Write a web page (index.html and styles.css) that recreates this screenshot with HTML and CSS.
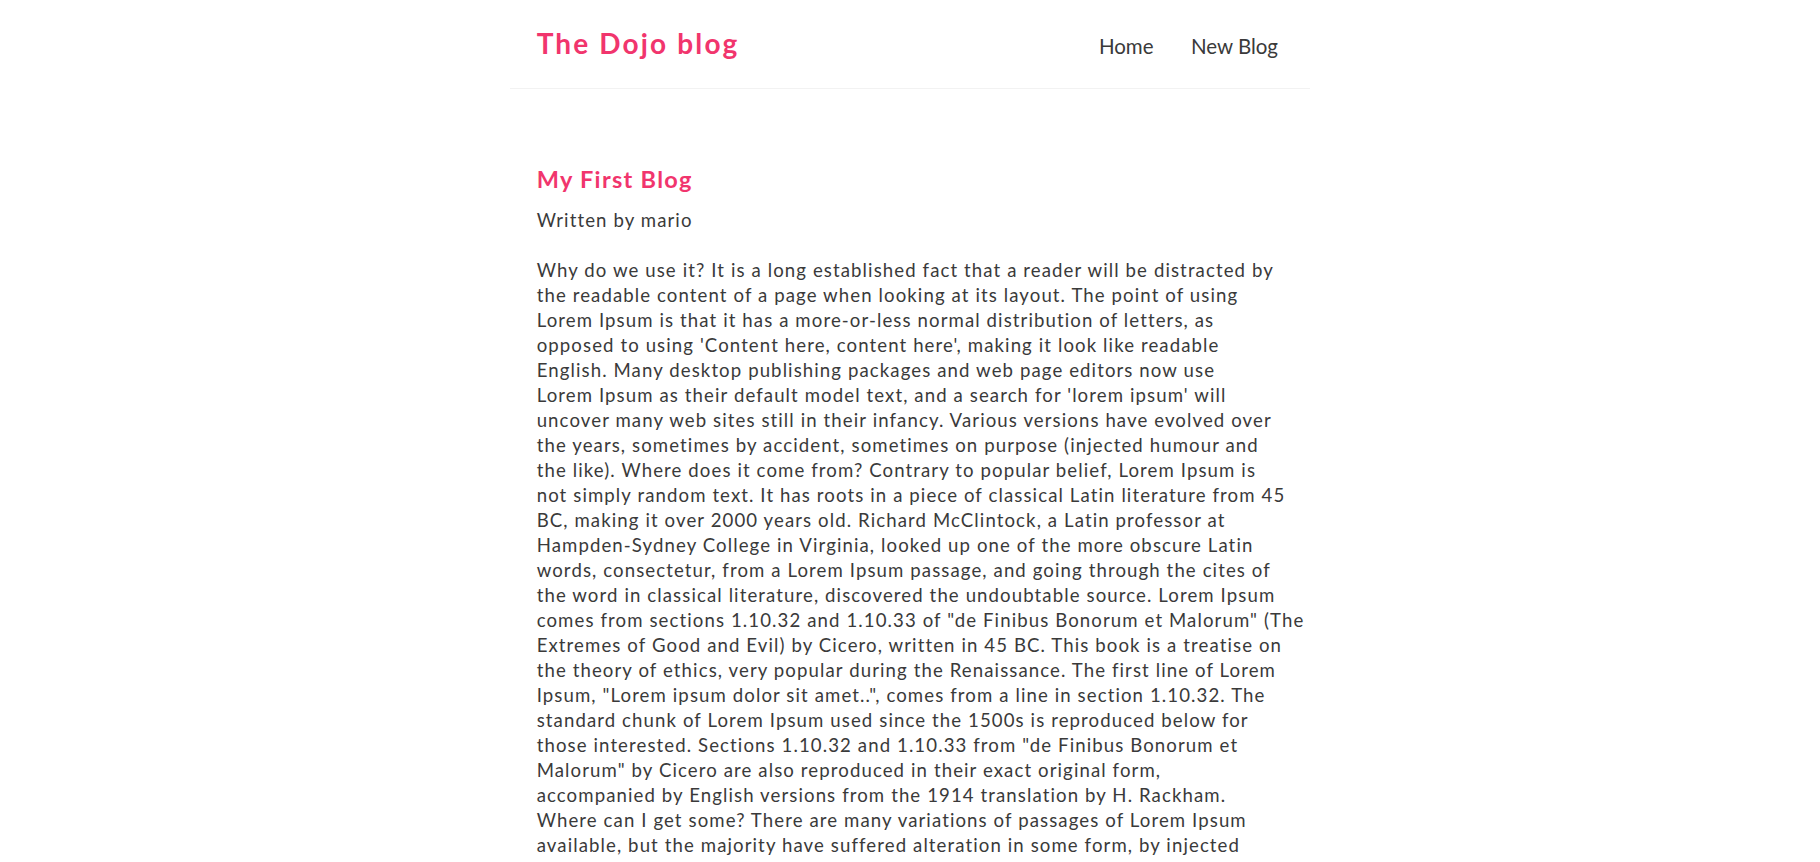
FILE: index.html
```html
<!DOCTYPE html>
<html lang="en">
<head>
<meta charset="utf-8">
<title>The Dojo blog</title>
<link rel="stylesheet" href="styles.css">
</head>
<body>
<div class="app">
  <nav class="navbar">
    <h1 class="brand">The Dojo blog</h1>
    <div class="links">
      <a href="#" class="link">Home</a>
      <a href="#" class="link">New Blog</a>
    </div>
  </nav>
  <main class="content">
    <article class="blog-details">
      <h2 class="blog-title">My First Blog</h2>
      <p class="blog-author">Written by mario</p>
      <div class="blog-body">Why do we use it? It is a long established fact that a reader will be distracted by<br>
the readable content of a page when looking at its layout. The point of using<br>
Lorem Ipsum is that it has a more-or-less normal distribution of letters, as<br>
opposed to using 'Content here, content here', making it look like readable<br>
English. Many desktop publishing packages and web page editors now use<br>
Lorem Ipsum as their default model text, and a search for 'lorem ipsum' will<br>
uncover many web sites still in their infancy. Various versions have evolved over<br>
the years, sometimes by accident, sometimes on purpose (injected humour and<br>
the like). Where does it come from? Contrary to popular belief, Lorem Ipsum is<br>
not simply random text. It has roots in a piece of classical Latin literature from 45<br>
BC, making it over 2000 years old. Richard McClintock, a Latin professor at<br>
Hampden-Sydney College in Virginia, looked up one of the more obscure Latin<br>
words, consectetur, from a Lorem Ipsum passage, and going through the cites of<br>
the word in classical literature, discovered the undoubtable source. Lorem Ipsum<br>
comes from sections 1.10.32 and 1.10.33 of "de Finibus Bonorum et Malorum" (The<br>
Extremes of Good and Evil) by Cicero, written in 45 BC. This book is a treatise on<br>
the theory of ethics, very popular during the Renaissance. The first line of Lorem<br>
Ipsum, "Lorem ipsum dolor sit amet..", comes from a line in section 1.10.32. The<br>
standard chunk of Lorem Ipsum used since the 1500s is reproduced below for<br>
those interested. Sections 1.10.32 and 1.10.33 from "de Finibus Bonorum et<br>
Malorum" by Cicero are also reproduced in their exact original form,<br>
accompanied by English versions from the 1914 translation by H. Rackham.<br>
Where can I get some? There are many variations of passages of Lorem Ipsum<br>
available, but the majority have suffered alteration in some form, by injected<br>
humour, or randomised words which don't look even slightly believable.</div>
    </article>
  </main>
</div>
</body>
</html>
```
FILE: styles.css
```css
* {
  margin: 0;
  box-sizing: border-box;
}

body {
  margin: 0;
  background: #ffffff;
  color: #3a3a3a;
  font-family: "Lato", "Liberation Sans", sans-serif;
}

.navbar {
  display: flex;
  align-items: baseline;
  max-width: 800px;
  height: 89px;
  margin: 0 auto;
  padding: 26.4px 24px 0 26.67px;
  border-bottom: 1px solid #f2f2f2;
}

.brand {
  color: #f1356d;
  font-size: 28px;
  font-weight: 700;
  letter-spacing: 2.15px;
  line-height: 1.2;
}

.links {
  display: flex;
  align-items: baseline;
  margin-left: auto;
}

.link {
  margin-left: 21.33px;
  padding: 8px;
  color: #3a3a3a;
  font-size: 20.5px;
  text-decoration: none;
}

.content {
  max-width: 800px;
  margin: 0 auto;
  padding: 75px 26.67px 40px;
}

.blog-title {
  color: #f1356d;
  font-size: 23.5px;
  font-weight: 700;
  letter-spacing: 1.3px;
  line-height: 30px;
  margin-bottom: 14px;
}

.blog-author {
  font-size: 18.6px;
  letter-spacing: 1.1px;
  line-height: 25px;
  margin-bottom: 25px;
}

.blog-body {
  font-size: 18.6px;
  letter-spacing: 1.1px;
  line-height: 25px;
  white-space: nowrap;
}
```
